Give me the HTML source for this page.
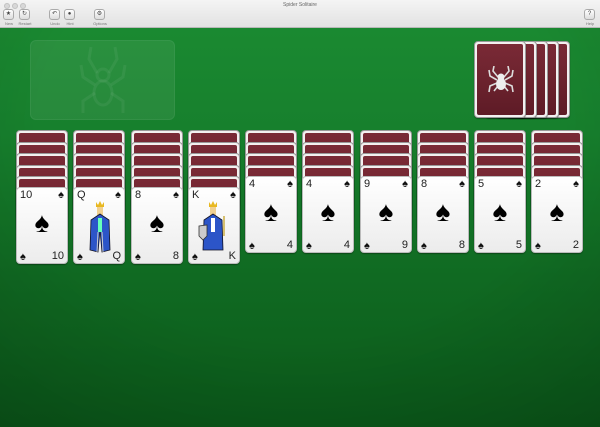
<!DOCTYPE html>
<html><head><meta charset="utf-8"><style>
*{margin:0;padding:0;box-sizing:border-box}
body{width:600px;height:427px;overflow:hidden;position:relative;font-family:"Liberation Sans",sans-serif;
background:radial-gradient(ellipse 80% 90% at 50% 30%,rgba(0,0,0,0) 55%,rgba(0,0,0,.18) 100%),linear-gradient(#1b8c32 0%,#17802d 30%,#106a22 65%,#0b5a1a 100%)}
.tb{position:absolute;left:0;top:0;width:600px;height:28px;background:linear-gradient(#f4f4f4,#e2e2e2);border-bottom:1px solid #b8b8b8}
.tl{position:absolute;top:3px;width:6px;height:6px;border-radius:50%;background:#d8d8d8;border:1px solid #c2c2c2}
.title{position:absolute;top:2px;left:0;width:600px;text-align:center;font-size:5px;color:#666}
.bt{position:absolute;top:9px;width:11px;height:11px;border-radius:3px;background:linear-gradient(#fff,#ddd);border:1px solid #aaa;font-size:6px;text-align:center;line-height:9px;color:#444}
.lb{position:absolute;top:21px;font-size:4px;color:#777;width:22px;text-align:center}
.found{position:absolute;left:30px;top:40px;width:145px;height:80px;border-radius:6px;background:rgba(255,255,255,.07);border:1px solid rgba(255,255,255,.06)}
.c{position:absolute;width:52px;height:77px;border-radius:4px;background:#fafafa;border:1px solid #bbb;box-shadow:0 1px 1px rgba(0,0,0,.35)}
.b{background:#f3f0f0;border:1px solid #999}
.b::after{content:"";position:absolute;left:2px;top:2px;right:2px;bottom:2px;border-radius:2px;background:linear-gradient(#7a2a36,#5e1b26)}
.f{background:linear-gradient(#fff,#ececec)}
.r{position:absolute;left:3px;top:1px;font-size:11px;color:#222}
.r2{position:absolute;right:3px;bottom:1px;font-size:11px;color:#222}
.s1{position:absolute;right:3px;top:1px;font-size:11px;color:#111}
.s2{position:absolute;left:3px;bottom:0px;font-size:11px;color:#111}
.big{position:absolute;left:0;width:100%;top:20px;text-align:center;font-size:28px;color:#000;line-height:30px}
.fig{position:absolute;left:14px;top:12px}
</style></head><body>
<div class="tb">
<div class="tl" style="left:4px"></div><div class="tl" style="left:12px"></div><div class="tl" style="left:20px"></div>
<div class="title">Spider Solitaire</div>
<div class="bt" style="left:3px">★</div><div class="lb" style="left:-2px">New</div>
<div class="bt" style="left:19px">↻</div><div class="lb" style="left:14px">Restart</div>
<div class="bt" style="left:49px">↶</div><div class="lb" style="left:44px">Undo</div>
<div class="bt" style="left:64px">●</div><div class="lb" style="left:59px">Hint</div>
<div class="bt" style="left:94px">⚙</div><div class="lb" style="left:89px">Options</div>
<div class="bt" style="left:584px">?</div><div class="lb" style="left:579px">Help</div>
</div>
<div class="found"><svg width="145" height="80" viewBox="0 0 145 80"><g fill="none" stroke="rgba(255,255,255,.06)" stroke-width="3"><ellipse cx="72" cy="52" rx="9" ry="12"/><circle cx="72" cy="34" r="6"/><path d="M66 32 L58 18 L60 6 M78 32 L86 18 L84 6 M64 44 L52 36 L50 24 M80 44 L92 36 L94 24 M64 52 L52 60 L52 72 M80 52 L92 60 L92 72"/></g></svg></div>

<div class="c b" style="left:518px;top:41px"></div>
<div class="c b" style="left:507px;top:41px"></div>
<div class="c b" style="left:496px;top:41px"></div>
<div class="c b" style="left:485px;top:41px"></div>
<div class="c b" style="left:474px;top:41px;z-index:1"><svg style="position:absolute;left:12px;top:24px;z-index:2" width="28" height="28" viewBox="0 0 28 28"><g fill="none" stroke="#ddd" stroke-width="1.6"><path d="M11 11 L6 5 L7 0 M17 11 L22 5 L21 0 M10 14 L3 10 L2 4 M18 14 L25 10 L26 4 M10 17 L3 20 L2 26 M18 17 L25 20 L26 26 M11 20 L7 25 M17 20 L21 25"/></g><circle cx="14" cy="11" r="3.5" fill="#eee"/><ellipse cx="14" cy="18" rx="5" ry="6" fill="#eee"/></svg></div>

<div class="c b" style="left:16px;top:130px"></div><div class="c b" style="left:16px;top:141.5px"></div><div class="c b" style="left:16px;top:153px"></div><div class="c b" style="left:16px;top:164.5px"></div><div class="c b" style="left:16px;top:176px"></div>
<div class="c f" style="left:16px;top:187px"><span class="r">10</span><span class="s1">♠</span><div class="big">♠</div><span class="s2">♠</span><span class="r2">10</span></div>
<div class="c b" style="left:73px;top:130px"></div><div class="c b" style="left:73px;top:141.5px"></div><div class="c b" style="left:73px;top:153px"></div><div class="c b" style="left:73px;top:164.5px"></div><div class="c b" style="left:73px;top:176px"></div>
<div class="c f" style="left:73px;top:187px"><span class="r">Q</span><span class="s1">♠</span>
<svg class="fig" width="24" height="56" viewBox="0 0 24 56"><path d="M8 2 L10 5 L12 1 L14 5 L16 2 L16 7 L8 7Z" fill="#e8b820"/><rect x="9" y="7" width="6" height="8" fill="#f0d090"/><path d="M12 14 L3 20 L2 50 L10 52 L12 30 L14 52 L22 50 L21 20Z" fill="#2c55c8" stroke="#112" stroke-width=".8"/><rect x="10" y="18" width="4" height="14" fill="#6fb"/><path d="M10 32 L9 52 M14 32 L15 52" stroke="#ccc"/></svg>
<span class="s2">♠</span><span class="r2">Q</span></div>
<div class="c b" style="left:131px;top:130px"></div><div class="c b" style="left:131px;top:141.5px"></div><div class="c b" style="left:131px;top:153px"></div><div class="c b" style="left:131px;top:164.5px"></div><div class="c b" style="left:131px;top:176px"></div>
<div class="c f" style="left:131px;top:187px"><span class="r">8</span><span class="s1">♠</span><div class="big">♠</div><span class="s2">♠</span><span class="r2">8</span></div>
<div class="c b" style="left:188px;top:130px"></div><div class="c b" style="left:188px;top:141.5px"></div><div class="c b" style="left:188px;top:153px"></div><div class="c b" style="left:188px;top:164.5px"></div><div class="c b" style="left:188px;top:176px"></div>
<div class="c f" style="left:188px;top:187px"><span class="r">K</span><span class="s1">♠</span>
<svg class="fig" width="28" height="56" viewBox="0 0 28 56" style="left:9px"><path d="M11 2 L13 5 L15 1 L17 5 L19 2 L19 7 L11 7Z" fill="#e8b820"/><rect x="12" y="7" width="6" height="8" fill="#f0d090"/><path d="M15 14 L6 20 L5 50 L25 50 L24 20Z" fill="#2c55c8" stroke="#112" stroke-width=".8"/><rect x="13" y="18" width="4" height="14" fill="#fff"/><path d="M1 26 L9 25 L9 36 L5 40 L1 36Z" fill="#ccc" stroke="#333" stroke-width=".8"/><rect x="25" y="16" width="2" height="20" fill="#d6c070"/></svg>
<span class="s2">♠</span><span class="r2">K</span></div>
<div class="c b" style="left:245px;top:130px"></div><div class="c b" style="left:245px;top:141.5px"></div><div class="c b" style="left:245px;top:153px"></div><div class="c b" style="left:245px;top:164.5px"></div>
<div class="c f" style="left:245px;top:175.5px"><span class="r">4</span><span class="s1">♠</span><div class="big">♠</div><span class="s2">♠</span><span class="r2">4</span></div>
<div class="c b" style="left:302px;top:130px"></div><div class="c b" style="left:302px;top:141.5px"></div><div class="c b" style="left:302px;top:153px"></div><div class="c b" style="left:302px;top:164.5px"></div>
<div class="c f" style="left:302px;top:175.5px"><span class="r">4</span><span class="s1">♠</span><div class="big">♠</div><span class="s2">♠</span><span class="r2">4</span></div>
<div class="c b" style="left:360px;top:130px"></div><div class="c b" style="left:360px;top:141.5px"></div><div class="c b" style="left:360px;top:153px"></div><div class="c b" style="left:360px;top:164.5px"></div>
<div class="c f" style="left:360px;top:175.5px"><span class="r">9</span><span class="s1">♠</span><div class="big">♠</div><span class="s2">♠</span><span class="r2">9</span></div>
<div class="c b" style="left:417px;top:130px"></div><div class="c b" style="left:417px;top:141.5px"></div><div class="c b" style="left:417px;top:153px"></div><div class="c b" style="left:417px;top:164.5px"></div>
<div class="c f" style="left:417px;top:175.5px"><span class="r">8</span><span class="s1">♠</span><div class="big">♠</div><span class="s2">♠</span><span class="r2">8</span></div>
<div class="c b" style="left:474px;top:130px"></div><div class="c b" style="left:474px;top:141.5px"></div><div class="c b" style="left:474px;top:153px"></div><div class="c b" style="left:474px;top:164.5px"></div>
<div class="c f" style="left:474px;top:175.5px"><span class="r">5</span><span class="s1">♠</span><div class="big">♠</div><span class="s2">♠</span><span class="r2">5</span></div>
<div class="c b" style="left:531px;top:130px"></div><div class="c b" style="left:531px;top:141.5px"></div><div class="c b" style="left:531px;top:153px"></div><div class="c b" style="left:531px;top:164.5px"></div>
<div class="c f" style="left:531px;top:175.5px"><span class="r">2</span><span class="s1">♠</span><div class="big">♠</div><span class="s2">♠</span><span class="r2">2</span></div>
</body></html>
